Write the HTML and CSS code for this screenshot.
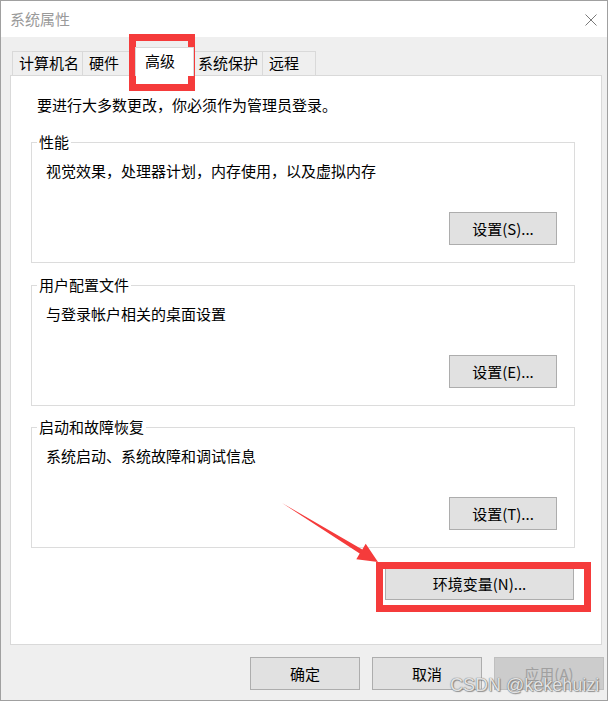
FILE: index.html
```html
<!DOCTYPE html>
<html lang="zh-CN">
<head>
<meta charset="utf-8">
<title>系统属性</title>
<link rel="stylesheet" href="styles.css">
</head>
<body>
<div class="window">
  <div class="titlebar">
    <span class="title">系统属性</span>
    <svg class="close" width="12" height="12" viewBox="0 0 12 12"><path d="M0.5 0.5 L11.5 11.5 M11.5 0.5 L0.5 11.5" stroke="#7a7a7a" stroke-width="1" fill="none"/></svg>
  </div>
  <div class="body">
    <div class="tabs">
      <div class="tab tab-w1">计算机名</div>
      <div class="tab tab-w2">硬件</div>
      <div class="tab tab-active">高级</div>
      <div class="tab tab-w4">系统保护</div>
      <div class="tab tab-w5">远程</div>
    </div>
    <div class="panel">
      <p class="info">要进行大多数更改，你必须作为管理员登录。</p>
      <div class="group">
        <span class="legend">性能</span>
        <p class="desc">视觉效果，处理器计划，内存使用，以及虚拟内存</p>
        <div class="row-end"><button class="btn btn-set">设置(S)...</button></div>
      </div>
      <div class="group group-2">
        <span class="legend">用户配置文件</span>
        <p class="desc">与登录帐户相关的桌面设置</p>
        <div class="row-end"><button class="btn btn-set">设置(E)...</button></div>
      </div>
      <div class="group group-3">
        <span class="legend">启动和故障恢复</span>
        <p class="desc">系统启动、系统故障和调试信息</p>
        <div class="row-end"><button class="btn btn-set">设置(T)...</button></div>
      </div>
      <div class="env-row"><button class="btn btn-env">环境变量(N)...</button></div>
    </div>
    <div class="footer">
      <button class="btn btn-foot">确定</button>
      <button class="btn btn-foot">取消</button>
      <button class="btn btn-foot btn-disabled">应用(A)</button>
    </div>
  </div>
</div>
<svg class="annot" width="613" height="702" viewBox="0 0 613 702">
  <rect x="132.5" y="37.5" width="59" height="50" fill="none" stroke="#f53b3b" stroke-width="7"/>
  <rect x="379.5" y="565.5" width="208" height="43" fill="none" stroke="#f53b3b" stroke-width="7"/>
  <polygon points="282,503 362.3,549.4 365.7,543.8 378,562 356.3,559.2 359.7,553.6" fill="#f53b3b"/>
</svg>
<div class="watermark">CSDN @kekehuizi</div>
</body>
</html>
```
FILE: styles.css
```css
* { box-sizing: border-box; }
html, body { margin: 0; padding: 0; background: #ffffff; }
body {
  width: 613px;
  height: 702px;
  overflow: hidden;
  position: relative;
  font-family: "Noto Sans CJK SC", "Microsoft YaHei", sans-serif;
  font-size: 15px;
  color: #000;
}
.window {
  width: 608px;
  height: 701px;
  border: 1px solid #a0a0a0;
  background: #efefef;
  display: flex;
  flex-direction: column;
}
.titlebar {
  height: 36px;
  background: #ffffff;
  display: flex;
  align-items: center;
  justify-content: space-between;
  padding: 0 10px 0 9px;
}
.title { color: #9a9a9a; line-height: 20px; }
.close { display: block; margin-top: 1px; }
.body {
  flex: 1;
  padding-top: 10px;
  display: flex;
  flex-direction: column;
}
.tabs {
  height: 28px;
  margin-left: 11px;
  display: flex;
  align-items: flex-end;
}
.tab {
  height: 24px;
  border: 1px solid #d9d9d9;
  border-bottom: none;
  padding-left: 6px;
  line-height: 22px;
  white-space: nowrap;
  background: #efefef;
}
.tab + .tab { border-left: none; }
.tab-w1 { width: 71px; }
.tab-w2 { width: 54px; }
.tab-w4 { width: 71px; border-left: none; }
.tab-w5 { width: 53px; }
.tab-active {
  width: 59px;
  height: 29px;
  margin: 0 -2px -1px -2px;
  border-left: 1px solid #d9d9d9 !important;
  background: #ffffff;
  padding-left: 9px;
  line-height: 26px;
  position: relative;
  z-index: 1;
}
.panel {
  width: 592px;
  height: 570px;
  margin-left: 9px;
  background: #ffffff;
  border: 1px solid #d9d9d9;
  padding: 19px 25px 0 20px;
}
.info {
  margin: 0 0 27px 6px;
  line-height: 20px;
}
.group {
  position: relative;
  width: 544px;
  height: 121px;
  border: 1px solid #dcdcdc;
  padding: 18px 17px 0 14px;
}
.group-2 { margin-top: 22px; }
.group-3 { margin-top: 21px; }
.legend {
  position: absolute;
  top: -11px;
  left: 5px;
  padding: 0 2px;
  background: #ffffff;
  line-height: 20px;
}
.desc {
  margin: 0;
  line-height: 20px;
}
.row-end {
  display: flex;
  justify-content: flex-end;
  margin-top: 31px;
}
.btn {
  font-family: inherit;
  font-size: 15px;
  color: #000;
  background: #e1e1e1;
  border: 1px solid #adadad;
  height: 33px;
  padding: 0;
  line-height: 20px;
  margin: 0;
}
.btn-set { width: 108px; }
.env-row {
  width: 544px;
  display: flex;
  justify-content: flex-end;
  margin-top: 19px;
}
.btn-env { width: 189px; margin-right: 1px; }
.footer {
  display: flex;
  justify-content: flex-end;
  gap: 12px;
  margin-top: 12px;
  padding-right: 3px;
}
.btn-foot { width: 110px; }
.btn-disabled {
  background: #cccccc;
  border-color: #bfbfbf;
  color: #a0a0a0;
}
.annot {
  position: absolute;
  left: 0;
  top: 0;
  pointer-events: none;
}
.watermark {
  position: absolute;
  left: 450px;
  top: 674px;
  font-family: "Liberation Sans", Arial, sans-serif;
  font-size: 18px;
  line-height: 22px;
  color: rgba(255, 255, 255, 0.8);
  text-shadow: 0 0 1px #7a7a7a, 0 0 1px #7a7a7a, 1px 1px 1px rgba(90, 90, 90, 0.6);
  white-space: nowrap;
}
```
